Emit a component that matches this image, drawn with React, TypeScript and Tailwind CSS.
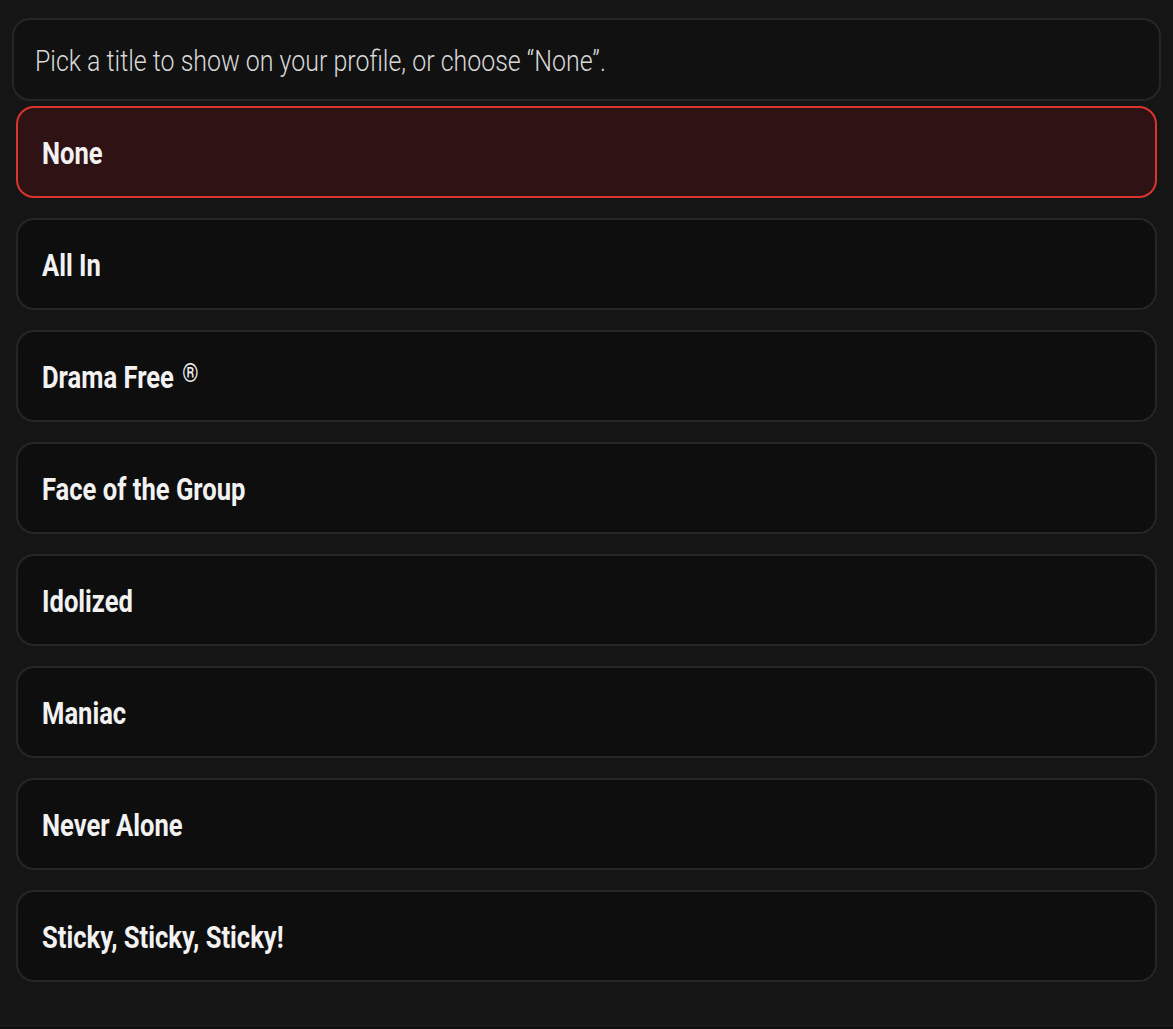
const titles = [
  "None",
  "All In",
  "Drama Free",
  "Face of the Group",
  "Idolized",
  "Maniac",
  "Never Alone",
  "Sticky, Sticky, Sticky!",
];

const font = {
  fontFamily: 'Roboto, "DejaVu Sans Condensed", sans-serif',
};

export default function App() {
  const selected = "None";
  return (
    <div className="min-h-[1029px] w-full bg-[#101010]" style={font}>
      <div className="h-[1026px] bg-[#151515] pt-[18px] border-b border-[#1e1e1e]">
        <div className="mx-[12px] h-[83px] flex items-center rounded-[18px] border-2 border-[#262626] bg-[#111111] px-[21px] pt-[5px]">
          <p className="inline-block origin-left scale-x-[0.86] whitespace-nowrap text-[29px] font-light text-[#d9d9d9]">
            Pick a title to show on your profile, or choose “None”.
          </p>
        </div>
        <ul className="mx-[16px] mt-[5px] flex flex-col gap-[20px]">
          {titles.map((t) => {
            const active = t === selected;
            return (
              <li
                key={t}
                className={
                  active
                    ? "h-[92px] flex items-center rounded-[18px] border-2 border-[#d9352f] bg-[#2f1214] px-[24px] pt-[4px]"
                    : "h-[92px] flex items-center rounded-[18px] border-2 border-[#262626] bg-[#0e0e0e] px-[24px] pt-[4px]"
                }
              >
                <span className="inline-block origin-left scale-x-[0.825] whitespace-nowrap text-[31px] font-bold text-[#f2f2f2]">
                  {t}
                  {t === "Drama Free" && (
                    <sup className="ml-[10px] text-[25px] font-normal relative top-[-6px]">®</sup>
                  )}
                </span>
              </li>
            );
          })}
        </ul>
      </div>
    </div>
  );
}
